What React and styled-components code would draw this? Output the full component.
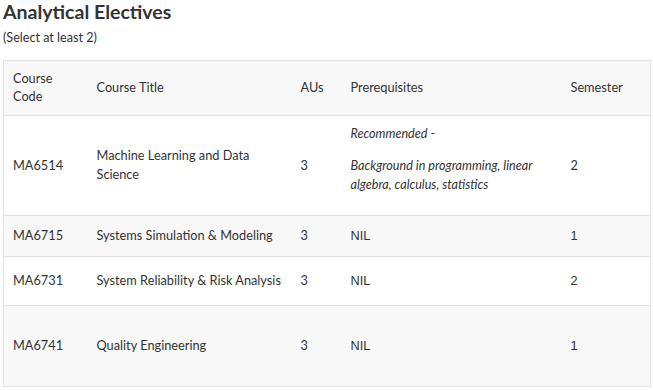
import React from "react";
import styled, { createGlobalStyle } from "styled-components";

const GlobalStyle = createGlobalStyle`
  html, body {
    margin: 0;
    padding: 0;
    background: #fff;
  }
  body {
    font-family: Lato, "Open Sans", sans-serif;
    color: #333;
  }
`;

const Page = styled.div`
  width: 647px;
  padding: 0 3px;
`;

const Title = styled.h2`
  margin: 0;
  font-size: 19.5px;
  line-height: 24px;
  font-weight: 700;
  color: #333;
`;

const Note = styled.p`
  margin: 6px 0 0;
  font-size: 12.6px;
  line-height: 16px;
`;

const Table = styled.table`
  margin-top: 14px;
  width: 647px;
  border-collapse: collapse;
  border: 1px solid #e2e2e2;
  font-size: 12.75px;
  line-height: 19px;
  table-layout: fixed;
`;

const Row = styled.tr`
  height: ${(p) => p.$h}px;
  background: ${(p) => (p.$shade ? "#f8f8f8" : "#fff")};
  border-top: 1px solid #e2e2e2;
`;

const Head = styled.th`
  text-align: left;
  font-weight: 400;
  padding: 0 4px 2px 9px;
  line-height: 18px;
  vertical-align: middle;
`;

const Cell = styled.td`
  padding: 0 4px 1px 9px;
  vertical-align: middle;
  font-family: ${(p) => (p.$plain ? '"Liberation Sans", Arial, sans-serif' : "inherit")};
`;

const Prereq = styled.div`
  font-style: italic;
  font-size: 12.6px;
  line-height: 19px;
  p {
    margin: 0 0 13px;
  }
`;

const courses = [
  { code: "MA6514", title: "Machine Learning and Data Science", au: 3, sem: 2, h: 100, shade: false, rec: true },
  { code: "MA6715", title: "Systems Simulation & Modeling", au: 3, sem: 1, h: 41, shade: true },
  { code: "MA6731", title: "System Reliability & Risk Analysis", au: 3, sem: 2, h: 49, shade: false },
  { code: "MA6741", title: "Quality Engineering", au: 3, sem: 1, h: 81, shade: true },
];

export default function App() {
  return (
    <Page>
      <GlobalStyle />
      <Title>Analytical Electives</Title>
      <Note>(Select at least 2)</Note>
      <Table>
        <colgroup>
          <col style={{ width: 84 }} />
          <col style={{ width: 204 }} />
          <col style={{ width: 50 }} />
          <col style={{ width: 220 }} />
          <col style={{ width: 89 }} />
        </colgroup>
        <thead>
          <Row $h={55} $shade>
            <Head>Course Code</Head>
            <Head>Course Title</Head>
            <Head>AUs</Head>
            <Head>Prerequisites</Head>
            <Head>Semester</Head>
          </Row>
        </thead>
        <tbody>
          {courses.map((c) => (
            <Row key={c.code} $h={c.h} $shade={c.shade}>
              <Cell>{c.code}</Cell>
              <Cell>{c.title}</Cell>
              <Cell>{c.au}</Cell>
              {c.rec ? (
                <Cell>
                  <Prereq>
                    <p>Recommended -</p>
                    <p>Background in programming, linear algebra, calculus, statistics</p>
                  </Prereq>
                </Cell>
              ) : (
                <Cell $plain>NIL</Cell>
              )}
              <Cell $plain={!c.rec}>{c.sem}</Cell>
            </Row>
          ))}
        </tbody>
      </Table>
    </Page>
  );
}
